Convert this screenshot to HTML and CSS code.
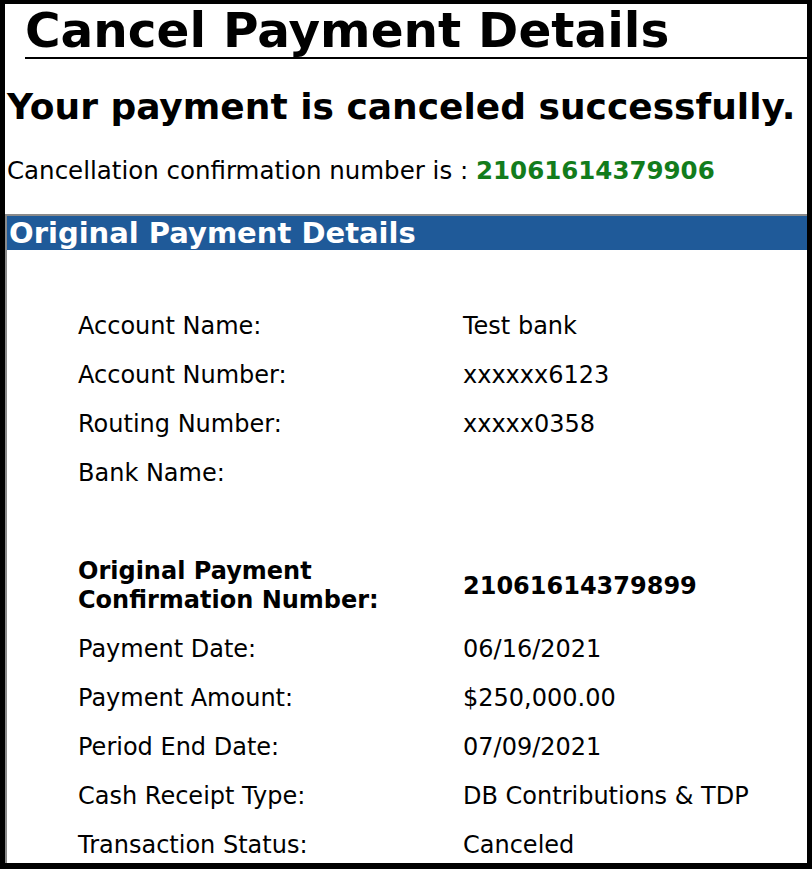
FILE: index.html
```html
<!doctype html>
<html lang="en">
    <head>
        <meta charset="UTF-8" />
        <meta name="viewport" content="width=device-width, initial-scale=1.0" />
        <title>Cancel Payment Details</title>
        <link rel="stylesheet" href="styles.css">
    </head>
    <body>
        <div class="frame">
            <h1 class="page-title">Cancel Payment Details</h1>

            <h2 class="status-message">Your payment is canceled successfully.</h2>

            <p class="confirmation">
                Cancellation confirmation number is :
                <span class="confirmation-number">21061614379906</span>
            </p>

            <div class="panel">
                <div class="panel-header">Original Payment Details</div>

                <div class="details">
                    <div class="row">
                        <div class="label">Account Name:</div>
                        <div class="value">Test bank</div>
                    </div>
                    <div class="row">
                        <div class="label">Account Number:</div>
                        <div class="value">xxxxxx6123</div>
                    </div>
                    <div class="row">
                        <div class="label">Routing Number:</div>
                        <div class="value">xxxxx0358</div>
                    </div>
                    <div class="row">
                        <div class="label">Bank Name:</div>
                        <div class="value"></div>
                    </div>
                    <div class="row spacer"></div>
                    <div class="row strong">
                        <div class="label">Original Payment<br>Confirmation Number:</div>
                        <div class="value">21061614379899</div>
                    </div>
                    <div class="row">
                        <div class="label">Payment Date:</div>
                        <div class="value">06/16/2021</div>
                    </div>
                    <div class="row">
                        <div class="label">Payment Amount:</div>
                        <div class="value">$250,000.00</div>
                    </div>
                    <div class="row">
                        <div class="label">Period End Date:</div>
                        <div class="value">07/09/2021</div>
                    </div>
                    <div class="row">
                        <div class="label">Cash Receipt Type:</div>
                        <div class="value">DB Contributions &amp; TDP</div>
                    </div>
                    <div class="row">
                        <div class="label">Transaction Status:</div>
                        <div class="value">Canceled</div>
                    </div>
                </div>
            </div>
        </div>
    </body>
</html>
```

FILE: styles.css
```css
/* General Styles */
html,
body {
    margin: 0;
    padding: 0;
    background-color: #000;
}

body {
    font-family: "DejaVu Sans", Verdana, sans-serif;
    color: #000;
}

.frame {
    box-sizing: border-box;
    display: flex;
    flex-direction: column;
    width: 812px;
    height: 869px;
    border: 5px solid #000;
    border-top-width: 4px;
    border-bottom-width: 6px;
    background-color: #fff;
    overflow: hidden;
}

/* Headings */
.page-title {
    margin: 0 0 0 20px;
    font-size: 48.5px;
    line-height: 52px;
    padding-bottom: 1px;
    border-bottom: 2px solid #000;
}

.status-message {
    margin: 26px 0 0 2px;
    font-size: 36px;
    line-height: 44px;
}

.confirmation {
    margin: 27px 0 0 2px;
    font-size: 24.5px;
    line-height: 30px;
}

.confirmation-number {
    color: #127c1c;
    font-weight: bold;
}

/* Payment Details Panel */
.panel {
    flex: 1;
    margin: 28px 0 0 0;
    border-top: 2px solid #8a8a8a;
    border-left: 2px solid #8a8a8a;
}

.panel-header {
    background-color: #1f5a99;
    color: #fff;
    font-size: 29px;
    font-weight: bold;
    line-height: 34px;
    padding-left: 2px;
}

.details {
    padding: 52px 0 0 71px;
}

.row {
    display: grid;
    grid-template-columns: 385px 1fr;
    align-items: center;
    padding: 10px 0;
    font-size: 24px;
    line-height: 29px;
}

.row.spacer {
    height: 29px;
}

.row.strong {
    font-weight: bold;
}
```
